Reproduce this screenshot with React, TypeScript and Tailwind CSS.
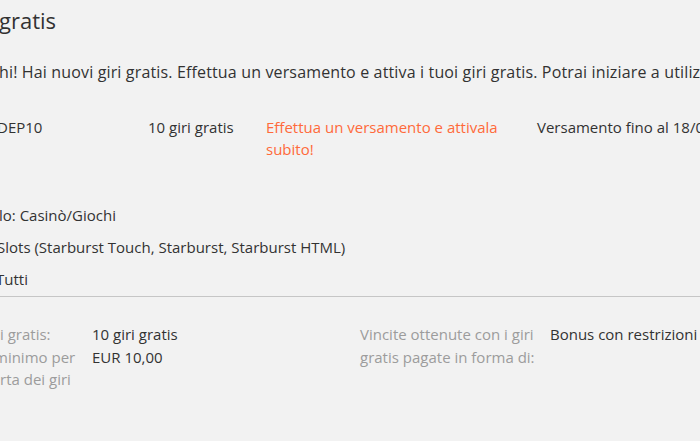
import React from 'react';

export default function App() {
  return (
    <div className="h-[441px] w-[700px] overflow-hidden bg-[#f2f2f2] font-['Open_Sans',sans-serif] text-[15px] text-[#323232]">
      <div className="w-[1100px] pt-[5px]">
        {/* Title */}
        <h1 className="-ml-px text-[22px] leading-[30px] font-normal">gratis</h1>

        {/* Intro */}
        <p className="mt-[26px] -ml-px whitespace-nowrap text-[16px] tracking-[0.15px] leading-[22px]">
          hi! Hai nuovi giri gratis. Effettua un versamento e attiva i tuoi giri gratis. Potrai iniziare a utilizzarli subito.
        </p>

        {/* Offer row */}
        <div className="mt-[33px] grid grid-cols-[148px_118px_271px_1fr] leading-[22px]">
          <div className="-ml-[3px]">DEP10</div>
          <div>10 giri gratis</div>
          <div className="pr-4 text-[#ff6a3a]">Effettua un versamento e attivala subito!</div>
          <div className="whitespace-nowrap">Versamento fino al 18/06/2017 23:59</div>
        </div>

        {/* Validity */}
        <div className="mt-[39px] flex flex-col leading-[32px]">
          <div className="-ml-px">lo: Casinò/Giochi</div>
          <div className="-ml-[3px]">Slots (Starburst Touch, Starburst, Starburst HTML)</div>
          <div className="-ml-[4px]">Tutti</div>
        </div>

        <div className="mt-[1px] border-t border-[#c6c6c6]" />

        {/* Details */}
        <div className="mt-[26px] grid grid-cols-[92px_268px_190px_1fr] leading-[22.5px]">
          <div className="text-[#9c9c9c]">
            <div>i gratis:</div>
            <div>
              <span className="-ml-[6px]">minimo per</span>
              <br />
              rta dei giri
            </div>
          </div>
          <div>
            <div>10 giri gratis</div>
            <div>EUR 10,00</div>
          </div>
          <div className="pr-2 text-[#9c9c9c]">Vincite ottenute con i giri gratis pagate in forma di:</div>
          <div className="whitespace-nowrap">Bonus con restrizioni</div>
        </div>
      </div>
    </div>
  );
}
